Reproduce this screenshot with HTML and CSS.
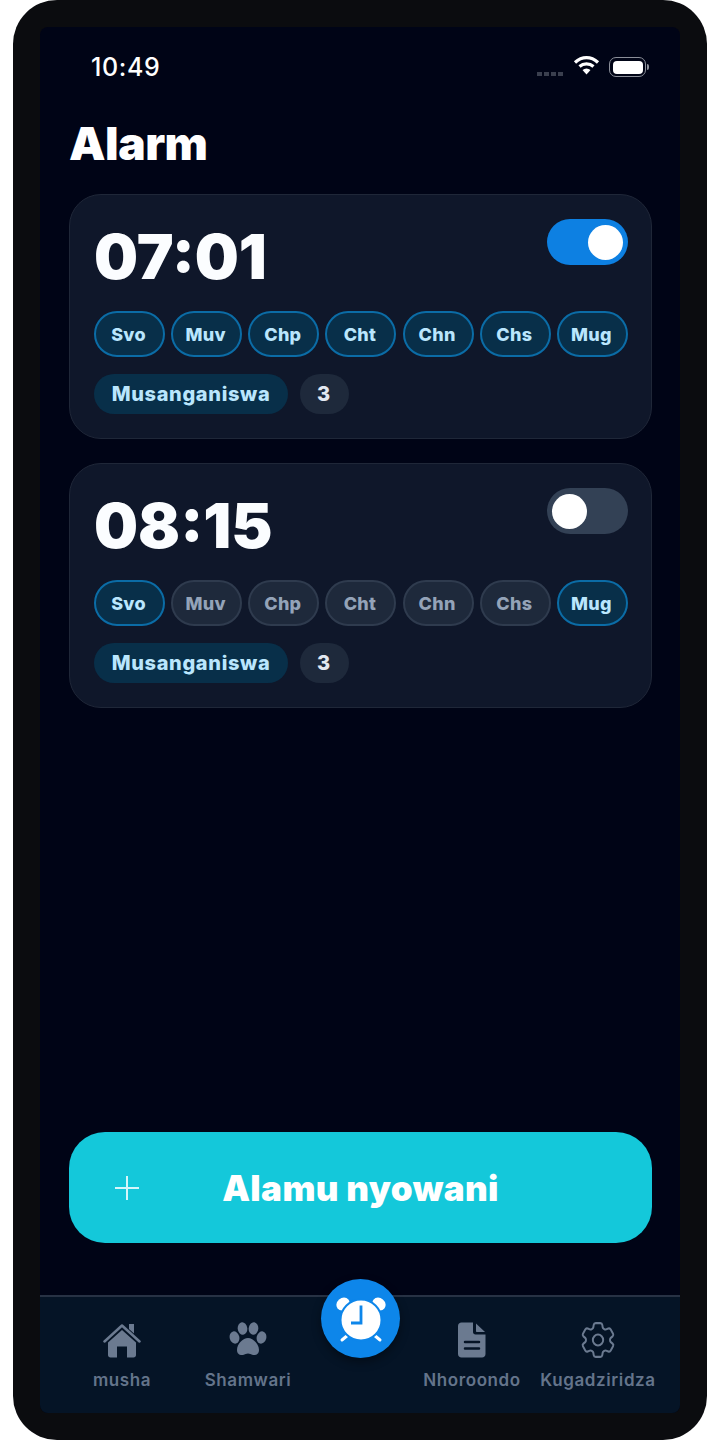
FILE: index.html
```html
<!DOCTYPE html>
<html lang="sn">
<head>
    <meta charset="UTF-8">
    <meta name="viewport" content="width=device-width, initial-scale=1.0">
    <title>Alarm</title>
    <link rel="stylesheet" href="styles.css">
</head>
<body>
    <div class="phone">
        <div class="screen">
            <div class="status-bar">
                <span class="clock">10:49</span>
                <div class="status-icons">
                    <div class="signal"><i></i><i></i><i></i><i></i></div>
                    <svg class="wifi" width="27" height="20" viewBox="0 0 27 20">
                        <path d="M2 7.500C9 1 18 1 25 7.500" fill="none" stroke="#fff" stroke-width="3.200"/>
                        <path d="M6.500 11.500C10.500 8 16.500 8 20.500 11.500" fill="none" stroke="#fff" stroke-width="3.200"/>
                        <path d="M13.500 19.500L9.500 15C12 13 15 13 17.500 15Z" fill="#fff"/>
                    </svg>
                    <div class="battery"><div class="battery-fill"></div></div>
                    <div class="battery-cap"></div>
                </div>
            </div>

            <h1>Alarm</h1>

            <div class="alarm-list">
                <div class="alarm-card">
                    <div class="alarm-top">
                        <div class="alarm-time">07:01</div>
                        <div class="toggle on"><div class="knob"></div></div>
                    </div>
                    <div class="days">
                        <div class="day active">Svo</div>
                        <div class="day active">Muv</div>
                        <div class="day active">Chp</div>
                        <div class="day active">Cht</div>
                        <div class="day active">Chn</div>
                        <div class="day active">Chs</div>
                        <div class="day active">Mug</div>
                    </div>
                    <div class="tags">
                        <div class="tag-name">Musanganiswa</div>
                        <div class="tag-count">3</div>
                    </div>
                </div>

                <div class="alarm-card">
                    <div class="alarm-top">
                        <div class="alarm-time">08:15</div>
                        <div class="toggle"><div class="knob"></div></div>
                    </div>
                    <div class="days">
                        <div class="day active">Svo</div>
                        <div class="day">Muv</div>
                        <div class="day">Chp</div>
                        <div class="day">Cht</div>
                        <div class="day">Chn</div>
                        <div class="day">Chs</div>
                        <div class="day active">Mug</div>
                    </div>
                    <div class="tags">
                        <div class="tag-name">Musanganiswa</div>
                        <div class="tag-count">3</div>
                    </div>
                </div>
            </div>

            <div class="add-wrap">
                <button class="add-btn" type="button">
                    <svg class="plus" width="26" height="26" viewBox="0 0 26 26">
                        <path d="M13 1V25M1 13H25" stroke="#d6f6fa" stroke-width="2" fill="none"/>
                    </svg>
                    <span>Alamu nyowani</span>
                </button>
            </div>

            <nav class="tabbar">
                <div class="tab">
                    <svg width="38" height="36" viewBox="0 0 38 36">
                        <path d="M1.500 19.500L19 3.500L36.500 19.500" fill="none" stroke="#6b7a90" stroke-width="2.500" stroke-linecap="round" stroke-linejoin="round"/>
                        <path d="M26 2H31V11.500L26 7Z" fill="#6b7a90"/>
                        <path d="M19 8L33 20.500V33C33 34.500 32 35.500 30.500 35.500H24V24.500H14V35.500H7.500C6 35.500 5 34.500 5 33V20.500Z" fill="#6b7a90"/>
                    </svg>
                    <span>musha</span>
                </div>
                <div class="tab">
                    <svg width="38" height="34" viewBox="0 0 38 34">
                        <ellipse cx="5.500" cy="15.500" rx="4.800" ry="6.200" transform="rotate(-14 5.500 15.500)" fill="#6b7a90"/>
                        <ellipse cx="13.500" cy="6.500" rx="4.800" ry="6.300" transform="rotate(-6 13.500 6.500)" fill="#6b7a90"/>
                        <ellipse cx="24.500" cy="6.500" rx="4.800" ry="6.300" transform="rotate(6 24.500 6.500)" fill="#6b7a90"/>
                        <ellipse cx="32.500" cy="15.500" rx="4.800" ry="6.200" transform="rotate(14 32.500 15.500)" fill="#6b7a90"/>
                        <path d="M19 16C14 16 8 22 8 28C8 32 11 33.500 14 33C16 32.600 17.500 31.500 19 31.500C20.500 31.500 22 32.600 24 33C27 33.500 30 32 30 28C30 22 24 16 19 16Z" fill="#6b7a90"/>
                    </svg>
                    <span>Shamwari</span>
                </div>
                <div class="tab-spacer"></div>
                <div class="tab">
                    <svg width="28" height="36" viewBox="0 0 28 36">
                        <path d="M3.500 0.500H15V10C15 11.500 16 12.500 17.500 12.500H27.500V32C27.500 34 26 35.500 24 35.500H3.500C1.500 35.500 0 34 0 32V4C0 2 1.500 0.500 3.500 0.500Z" fill="#6b7a90"/>
                        <path d="M18 1.500L27 10H19C18.400 10 18 9.600 18 9Z" fill="#6b7a90"/>
                        <path d="M7 20H21M7 26.500H21" stroke="#051426" stroke-width="2.500" stroke-linecap="round"/>
                    </svg>
                    <span>Nhoroondo</span>
                </div>
                <div class="tab">
                    <svg width="36" height="36" viewBox="1.900 2.400 20.200 19.200" preserveAspectRatio="none" fill="none" stroke="#6b7a90" stroke-width="1.100" stroke-linecap="round" stroke-linejoin="round">
                        <path d="M9.594 3.940c.09-.542.56-.94 1.110-.94h2.593c.55 0 1.020.398 1.110.94l.213 1.281c.063.374.313.686.645.870.074.040.147.083.220.127.324.196.720.257 1.075.124l1.217-.456a1.125 1.125 0 011.370.490l1.296 2.247a1.125 1.125 0 01-.260 1.431l-1.003.827c-.293.240-.438.613-.431.992a6.759 6.759 0 010 .255c-.007.378.138.750.430.990l1.005.828c.424.350.534.954.260 1.430l-1.298 2.247a1.125 1.125 0 01-1.369.491l-1.217-.456c-.355-.133-.750-.072-1.076.124a6.570 6.570 0 01-.220.128c-.331.183-.581.495-.644.869l-.213 1.280c-.09.543-.56.941-1.110.941h-2.594c-.55 0-1.020-.398-1.110-.940l-.213-1.281c-.062-.374-.312-.686-.644-.870a6.520 6.520 0 01-.220-.127c-.325-.196-.720-.257-1.076-.124l-1.217.456a1.125 1.125 0 01-1.369-.490l-1.297-2.247a1.125 1.125 0 01.260-1.431l1.004-.827c.292-.240.437-.613.430-.992a6.932 6.932 0 010-.255c.007-.378-.138-.750-.430-.990l-1.004-.828a1.125 1.125 0 01-.260-1.430l1.297-2.247a1.125 1.125 0 011.370-.491l1.216.456c.356.133.751.072 1.076-.124.072-.044.146-.087.220-.128.332-.183.582-.495.644-.869l.214-1.281z"/>
                        <circle cx="12" cy="12" r="2.900"/>
                    </svg>
                    <span>Kugadziridza</span>
                </div>
                <div class="fab">
                    <svg width="52" height="52" viewBox="0 0 52 52">
                        <ellipse cx="8" cy="11" rx="7" ry="6" transform="rotate(-40 8 11)" fill="#fff"/>
                        <ellipse cx="44" cy="11" rx="7" ry="6" transform="rotate(40 44 11)" fill="#fff"/>
                        <path d="M7 47L13 42M45 47L39 42" stroke="#fff" stroke-width="3" stroke-linecap="round"/>
                        <circle cx="26" cy="27" r="20.500" fill="#fff" stroke="#0d86ea" stroke-width="2"/>
                        <path d="M26 12.500V30H16" fill="none" stroke="#0d86ea" stroke-width="2.800"/>
                    </svg>
                </div>
            </nav>
        </div>
    </div>
</body>
</html>
```

FILE: styles.css
```css
* {
    box-sizing: border-box;
}

body {
    margin: 0;
    width: 720px;
    height: 1440px;
    background-color: #ffffff;
    font-family: Inter, "Liberation Sans", sans-serif;
}

.phone {
    width: 694px;
    height: 1440px;
    margin-left: 13px;
    padding: 27px;
    background-color: #0b0c0f;
    border-radius: 44px;
}

.screen {
    position: relative;
    height: 100%;
    display: flex;
    flex-direction: column;
    background-color: #000416;
    border-radius: 8px;
}

.status-bar {
    display: flex;
    justify-content: space-between;
    align-items: center;
    height: 26px;
    margin-top: 27px;
    padding: 0 31px 0 51px;
}

.clock {
    font-size: 25px;
    font-weight: 500;
    letter-spacing: 0.6px;
    color: #ffffff;
}

.status-icons {
    display: flex;
    align-items: center;
}

.signal {
    display: flex;
    gap: 2px;
    margin: 13px 10px 0 0;
}

.signal i {
    display: block;
    width: 5px;
    height: 4px;
    background-color: #3a3f4e;
}

.wifi {
    margin: -4px 9px 0 0;
}

.battery {
    width: 37px;
    height: 20px;
    padding: 2.500px;
    border: 1.500px solid #8b8f99;
    border-radius: 7px;
}

.battery-fill {
    height: 100%;
    background-color: #ffffff;
    border-radius: 4px;
}

.battery-cap {
    width: 2px;
    height: 6px;
    margin-left: 1px;
    background-color: #8b8f99;
    border-radius: 0 2px 2px 0;
}

h1 {
    margin: 37px 0 0 29px;
    font-size: 46px;
    line-height: 52px;
    font-weight: 900;
    letter-spacing: -0.5px;
    color: #ffffff;
}

.alarm-list {
    display: flex;
    flex-direction: column;
    gap: 24px;
    margin: 25px 28px 0 29px;
}

.alarm-card {
    height: 245px;
    padding: 24px 23px 0 24px;
    background-color: #0f172a;
    border: 1px solid #1f2738;
    border-radius: 32px;
}

.alarm-top {
    display: flex;
    justify-content: space-between;
    align-items: flex-start;
    height: 92px;
}

.alarm-time {
    margin-top: 1px;
    font-size: 62px;
    line-height: 74px;
    font-weight: 900;
    color: #fbfdff;
}

.toggle {
    display: flex;
    align-items: center;
    width: 81px;
    height: 46px;
    padding: 0 5px;
    background-color: #334155;
    border-radius: 23px;
}

.toggle.on {
    justify-content: flex-end;
    background-color: #0d80e2;
}

.knob {
    width: 35px;
    height: 35px;
    background-color: #ffffff;
    border-radius: 50%;
}

.days {
    display: flex;
    justify-content: space-between;
}

.day {
    display: flex;
    align-items: center;
    justify-content: center;
    width: 71px;
    height: 46px;
    padding-right: 2px;
    font-size: 18px;
    font-weight: 800;
    letter-spacing: 0.3px;
    color: #94a3b8;
    background-color: #1e293b;
    border: 2px solid #2f3b4e;
    border-radius: 23px;
}

.day.active {
    color: #bae6fd;
    background-color: #082f49;
    border-color: #0b6ca6;
}

.tags {
    display: flex;
    align-items: center;
    gap: 12px;
    margin-top: 17px;
}

.tag-name {
    display: flex;
    align-items: center;
    justify-content: center;
    width: 194px;
    height: 40px;
    font-size: 20px;
    font-weight: 800;
    letter-spacing: 0.65px;
    color: #bae6fd;
    background-color: #082f49;
    border-radius: 20px;
}

.tag-count {
    display: flex;
    align-items: center;
    justify-content: center;
    width: 49px;
    height: 40px;
    padding-right: 2px;
    font-size: 20px;
    font-weight: 800;
    color: #e2e8f0;
    background-color: #1e293b;
    border-radius: 20px;
}

.add-wrap {
    margin: auto 28px 0 29px;
}

.add-btn {
    position: relative;
    display: flex;
    align-items: center;
    justify-content: center;
    width: 100%;
    height: 111px;
    padding: 0;
    font-family: inherit;
    font-size: 35px;
    font-weight: 900;
    letter-spacing: 0.4px;
    color: #ffffff;
    background-color: #14c8da;
    border: none;
    border-radius: 36px;
}

.plus {
    position: absolute;
    left: 45px;
    top: 43px;
}

.tabbar {
    position: relative;
    display: flex;
    height: 118px;
    margin-top: 52px;
    padding: 25px 19px 0 19px;
    background-color: #051426;
    border-top: 2px solid #273244;
    border-radius: 0 0 8px 8px;
}

.tab {
    display: flex;
    flex-direction: column;
    align-items: center;
    justify-content: space-between;
    width: 126px;
    height: 68px;
    font-size: 17px;
    font-weight: 600;
    letter-spacing: 0.6px;
    color: #64748b;
}

.tab-spacer {
    width: 98px;
}

.fab {
    position: absolute;
    left: 281px;
    top: -18px;
    display: flex;
    align-items: center;
    justify-content: center;
    width: 79px;
    height: 79px;
    background-color: #0d86ea;
    border-radius: 50%;
    box-shadow: 0 4px 10px rgba(0, 0, 0, 0.4);
}
```
